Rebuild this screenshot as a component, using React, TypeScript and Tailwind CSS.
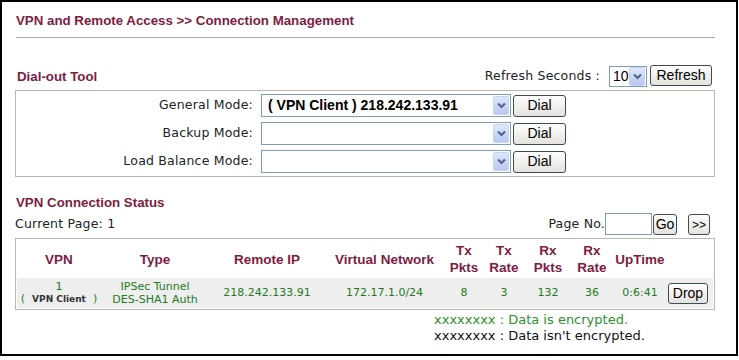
import React from 'react';

const maroon = 'text-[#7d1d3f]';
const sans = "font-['Liberation_Sans',Arial,sans-serif]";
const verd = "font-['DejaVu_Sans',Verdana,sans-serif]";

function Arrow() {
  return (
    <div className="w-[16px] h-[19px] my-auto mr-px rounded-[2px] bg-gradient-to-b from-[#dfe8fb] to-[#b7c8f2] border border-[#c5d3f5] flex items-center justify-center">
      <svg width="9" height="7" viewBox="0 0 9 7">
        <path d="M1 1.5 L4.5 5 L8 1.5" fill="none" stroke="#4d6185" strokeWidth="2" />
      </svg>
    </div>
  );
}

function Select({ width, text }: { width: string; text?: string }) {
  return (
    <div className={`${width} h-[23px] border border-[#7f9db9] bg-white flex items-center`}>
      <div className={`flex-1 pl-[6px] text-[14px] font-bold text-black ${sans} whitespace-nowrap`}>{text}</div>
      <Arrow />
    </div>
  );
}

function Btn({ label, className }: { label: string; className: string }) {
  return (
    <div
      className={`${className} flex items-center justify-center rounded-[3px] border border-[#3c4a5c] bg-gradient-to-b from-white to-[#e4e2dc] text-black ${sans}`}
    >
      {label}
    </div>
  );
}

function ModeRow({ label, text }: { label: string; text?: string }) {
  return (
    <div className="flex items-center h-[23px]">
      <div className={`w-[237px] text-right text-[12.5px] tracking-[0.2px] text-[#222] ${verd}`}>{label}</div>
      <div className="ml-[8px]">
        <Select width="w-[250px]" text={text} />
      </div>
      <Btn label="Dial" className="ml-[2px] w-[53px] h-[22px] text-[14px]" />
    </div>
  );
}

const cols = 'grid grid-cols-[84px_108px_116px_119px_40px_40px_48px_40px_56px_47px]';

export default function App() {
  const headers = ['VPN', 'Type', 'Remote IP', 'Virtual Network', 'Tx\nPkts', 'Tx\nRate', 'Rx\nPkts', 'Rx\nRate', 'UpTime', ''];
  const cell = `flex items-center justify-center text-center text-[11px] leading-[12px] text-[#1e7b1e] ${verd}`;

  return (
    <div className="w-[739px] h-[360px] bg-white">
      <div className="w-[738px] h-[356px] border-2 border-black pl-[13px]">
        {/* Title */}
        <div className={`pt-[11px] ml-px text-[13.3px] leading-[16px] font-bold ${maroon} ${sans}`}>
          VPN and Remote Access &gt;&gt; Connection Management
        </div>
        <div className="mt-[8px] ml-px w-[699px] h-px bg-[#a9a9a0]" />

        {/* Dial-out Tool header */}
        <div className="mt-[27px] w-[700px] flex items-end h-[22px]">
          <div className={`ml-[2px] text-[13.3px] font-bold ${maroon} ${sans}`}>Dial-out Tool</div>
          <div className="flex-1" />
          <div className={`mb-[1px] text-[12.5px] tracking-[0.2px] text-[#222] ${verd}`}>Refresh Seconds :</div>
          <div className="ml-[9px] w-[38px] h-[21px] border border-[#7f9db9] flex items-center">
            <div className={`flex-1 pl-[3px] text-[14px] text-black ${sans}`}>10</div>
            <Arrow />
          </div>
          <Btn label="Refresh" className="ml-[3px] mr-[3px] mb-px w-[62px] h-[21px] text-[14px]" />
        </div>

        {/* Dial-out box */}
        <div className="mt-[3px] w-[700px] border border-[#b9b7ad] pt-[3px] pb-[3px] flex flex-col gap-[5px]">
          <ModeRow label="General Mode:" text="( VPN Client ) 218.242.133.91" />
          <ModeRow label="Backup Mode:" />
          <ModeRow label="Load Balance Mode:" />
        </div>

        {/* VPN Connection Status */}
        <div className={`mt-[18px] ml-px text-[13.3px] leading-[16px] font-bold ${maroon} ${sans}`}>VPN Connection Status</div>
        <div className="w-[700px] flex items-start">
          <div className={`mt-[5px] text-[12.5px] tracking-[0.2px] leading-[15px] text-[#222] ${verd}`}>Current Page: 1</div>
          <div className="flex-1" />
          <div className="mt-[2px] flex items-end">
            <div className={`mb-[1px] text-[12.5px] tracking-[0.2px] text-[#222] ${verd}`}>Page No.</div>
            <div className="w-[47px] h-[22px] border border-[#7f9db9] bg-white" />
            <Btn label="Go" className="ml-px w-[24px] h-[21px] text-[14px]" />
            <Btn label=">>" className="ml-[11px] mr-[5px] w-[22px] h-[21px] text-[12px]" />
          </div>
        </div>

        {/* Table */}
        <div className="mt-[3px] w-[700px] border border-[#b9b7ad] p-px">
          <div className={`${cols} h-[38px]`}>
            {headers.map((h, i) => (
              <div
                key={i}
                className={`flex items-center justify-center text-center whitespace-pre-line text-[13.5px] leading-[17px] font-bold ${maroon} ${sans}`}
              >
                {h}
              </div>
            ))}
          </div>
          <div className={`${cols} h-[30px] bg-[#eeeeee]`}>
            <div className={`${cell} flex-col`}>
              <div>1</div>
              <div className="flex items-center gap-[7px]">
                <span>(</span>
                <span className="text-[9px] font-bold text-[#333]">VPN Client</span>
                <span>)</span>
              </div>
            </div>
            <div className={`${cell} leading-[13px]`}>
              IPSec Tunnel
              <br />
              DES-SHA1 Auth
            </div>
            <div className={cell}>218.242.133.91</div>
            <div className={cell}>172.17.1.0/24</div>
            <div className={cell}>8</div>
            <div className={cell}>3</div>
            <div className={cell}>132</div>
            <div className={cell}>36</div>
            <div className={cell}>0:6:41</div>
            <div className="flex items-center">
              <Btn label="Drop" className="w-[40px] h-[21px] text-[14px]" />
            </div>
          </div>
        </div>

        {/* Legend */}
        <div className={`mt-[2px] pl-[419px] text-[13px] leading-[16px] ${verd}`}>
          <div className="text-[#2f8f2f]">xxxxxxxx : Data is encrypted.</div>
          <div className="text-[#111]">xxxxxxxx : Data isn't encrypted.</div>
        </div>
      </div>
    </div>
  );
}
